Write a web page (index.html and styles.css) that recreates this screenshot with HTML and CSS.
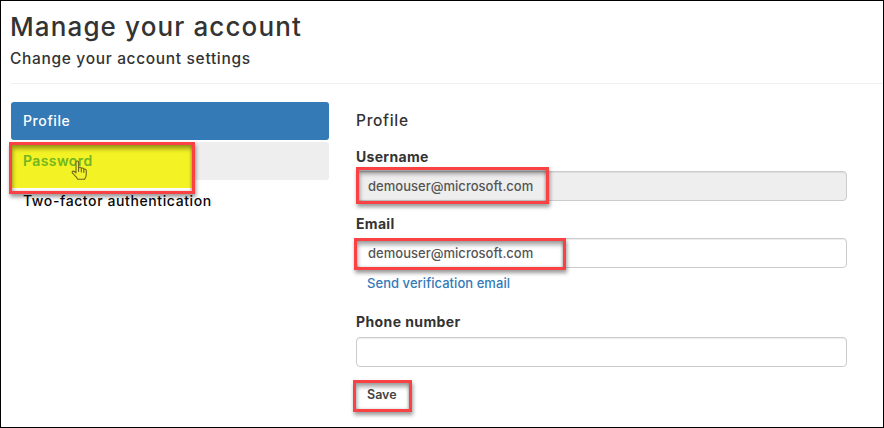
FILE: index.html
```html
<!DOCTYPE html>
<html lang="en">
<head>
<meta charset="utf-8">
<title>Manage your account</title>
<link rel="stylesheet" href="styles.css">
</head>
<body>
<div class="page">
  <header class="header">
    <h1>Manage your account</h1>
    <p class="subtitle">Change your account settings</p>
  </header>
  <main class="columns">
    <nav class="menu">
      <a class="item active">Profile</a>
      <a class="item hover"><span class="password">Password</span>
        <span class="mark mark-password"></span>
        <svg class="cursor" width="17" height="21" viewBox="0 0 17 21"><path d="M5 12V3Q5 1 6.3 1T7.6 3V8.5Q7.8 7.1 9 7.2T10.3 8.8Q10.7 7.7 11.8 8T12.8 9.6Q13.3 8.8 14.3 9.2T15.3 11V14.5Q15.2 17 13.5 19.3H6.8Q5.6 17.2 1.5 13.2Q.7 12 1.8 11.3T5 12.8M7.6 8.5V11.5M10.3 8.8V12M12.8 9.6V12.5" fill="#f3f12c" stroke="#6b681a" stroke-width="1.1" stroke-linejoin="round" stroke-linecap="round"/></svg>
      </a>
      <a class="item plain"><span class="twofactor">Two-factor authentication</span></a>
    </nav>
    <form class="form">
      <h2>Profile</h2>
      <label class="l-user">Username</label>
      <div class="field disabled"><span>demouser@microsoft.com</span><i class="mark mark-user"></i></div>
      <label class="l-email">Email</label>
      <div class="field"><span>demouser@microsoft.com</span><i class="mark mark-email"></i></div>
      <a class="verify">Send verification email</a>
      <label class="l-phone">Phone number</label>
      <div class="field"></div>
      <div class="save"><span>Save</span><i class="mark mark-save"></i></div>
    </form>
  </main>
</div>
</body>
</html>
```
FILE: styles.css
```css
* { box-sizing: border-box; }
body {
  margin: 0;
  font-family: Inter, "Liberation Sans", sans-serif;
  color: #333;
  background: #fff;
}
.page {
  width: 884px;
  height: 428px;
  border: 1px solid #000;
  padding-left: 10px;
  overflow: hidden;
}
.header {
  height: 83px;
  border-bottom: 1px solid #f0f0f0;
  padding-top: 8px;
  white-space: nowrap;
}
h1 {
  margin: 0 0 0 -1px;
  font-size: 26px;
  line-height: 35px;
  font-weight: 500;
  letter-spacing: 1.12px;
}
.subtitle {
  margin: 1px 0 0 -1px;
  font-size: 15.5px;
  line-height: 27px;
  font-weight: 500;
  letter-spacing: 0.67px;
}
.columns {
  display: flex;
  gap: 27px;
  padding-top: 18px;
}
.menu {
  width: 318px;
  display: flex;
  flex-direction: column;
  gap: 2px;
}
.item {
  position: relative;
  height: 38px;
  padding-left: 12px;
  border-radius: 3px;
  font-size: 14px;
  line-height: 38px;
  font-weight: 500;
  letter-spacing: 0.6px;
}
.active { background: #337ab7; color: #fff; }
.hover { background: #eee; }
.password {
  position: relative;
  z-index: 2;
  color: #72b51f;
  font-weight: 600;
  letter-spacing: 0.4px;
}
.twofactor { position: relative; z-index: 2; color: #080808; }
.form { width: 491px; }
h2 {
  margin: 0;
  height: 43px;
  font-size: 15.5px;
  line-height: 37px;
  font-weight: 500;
  letter-spacing: 0.7px;
}
label {
  display: block;
  font-size: 14px;
  line-height: 24px;
  font-weight: 700;
  letter-spacing: 0.3px;
}
.l-user { height: 26px; }
.l-email { height: 37px; padding-top: 11px; }
.l-phone { height: 28px; line-height: 26px; letter-spacing: 0.4px; }
.field {
  position: relative;
  height: 30px;
  border: 1px solid #ccc;
  border-radius: 4px;
  padding-left: 11px;
  font-size: 13px;
  line-height: 28px;
  font-weight: 500;
  letter-spacing: 0.02px;
  color: #555;
  box-shadow: inset 0 1px 1px #00000013;
}
.disabled { background: #eee; }
.verify {
  display: block;
  height: 41px;
  padding-left: 11px;
  color: #337ab7;
  font-size: 13px;
  line-height: 31px;
  font-weight: 500;
  letter-spacing: 0.05px;
}
.save {
  position: relative;
  width: 56px;
  height: 30px;
  margin-top: 13px;
  padding-left: 11px;
  font-size: 12.5px;
  line-height: 30px;
  font-weight: 600;
  color: #444;
}
.mark {
  position: absolute;
  border: 3px solid #fa4245;
  box-shadow: 1px 3px 4px #0006, inset 1px 4px 4px #0005, inset -1px 0 3px #0003;
}
.mark-password {
  left: -2px;
  top: 0;
  width: 186px;
  height: 52px;
  background: linear-gradient(#f3f224 0 43px, #fff 43px);
}
.mark-user { left: -1px; top: -5px; width: 193px; height: 37px; }
.mark-email { left: -3px; top: -1px; width: 212px; height: 32px; }
.mark-save { left: -3px; top: 0; width: 59px; height: 32px; }
.cursor { position: absolute; left: 60px; top: 18px; z-index: 3; }
```
